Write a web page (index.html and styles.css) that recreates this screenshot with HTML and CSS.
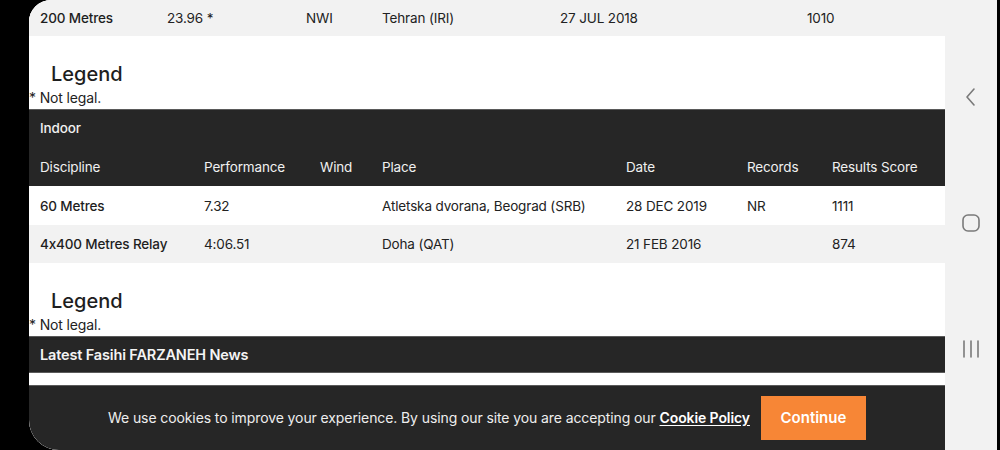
FILE: index.html
```html
<!DOCTYPE html>
<html lang="en">
<head>
<meta charset="utf-8">
<title>Fasihi FARZANEH</title>
<link rel="stylesheet" href="styles.css">
</head>
<body>
<div class="screen">
  <main class="page">
    <div class="row row-out alt">
      <span class="disc">200 Metres</span>
      <span>23.96 *</span>
      <span>NWI</span>
      <span>Tehran (IRI)</span>
      <span>27 JUL 2018</span>
      <span>1010</span>
    </div>

    <section class="legend">
      <h3 class="legend-title">Legend</h3>
      <p class="legend-note">* Not legal.</p>
    </section>

    <div class="dark-head">
      <div class="caption">Indoor</div>
      <div class="row row-in head">
        <span>Discipline</span>
        <span>Performance</span>
        <span>Wind</span>
        <span>Place</span>
        <span>Date</span>
        <span>Records</span>
        <span>Results Score</span>
      </div>
    </div>
    <div class="row row-in first">
      <span class="disc">60 Metres</span>
      <span>7.32</span>
      <span></span>
      <span>Atletska dvorana, Beograd (SRB)</span>
      <span>28 DEC 2019</span>
      <span>NR</span>
      <span>1111</span>
    </div>
    <div class="row row-in alt">
      <span class="disc">4x400 Metres Relay</span>
      <span>4:06.51</span>
      <span></span>
      <span>Doha (QAT)</span>
      <span>21 FEB 2016</span>
      <span></span>
      <span>874</span>
    </div>

    <section class="legend">
      <h3 class="legend-title">Legend</h3>
      <p class="legend-note">* Not legal.</p>
    </section>

    <div class="news-bar">Latest Fasihi FARZANEH News</div>

    <div class="cookie">
      <p class="cookie-text">We use cookies to improve your experience. By using our site you are accepting our <a class="cookie-link" href="#">Cookie Policy</a></p>
      <button class="cookie-btn">Continue</button>
    </div>
  </main>

  <nav class="navbar">
    <svg class="nav-icon" width="14" height="20" viewBox="0 0 14 20"><path d="M10 2 L3 10 L10 18" fill="none" stroke="#7a7a7a" stroke-width="1.6" stroke-linecap="round" stroke-linejoin="round"/></svg>
    <svg class="nav-icon" width="20" height="20" viewBox="0 0 20 20"><rect x="2" y="2" width="16" height="16" rx="5" fill="none" stroke="#7a7a7a" stroke-width="1.6"/></svg>
    <svg class="nav-icon" width="18" height="20" viewBox="0 0 18 20"><path d="M2 2 V18 M9 2 V18 M16 2 V18" fill="none" stroke="#7a7a7a" stroke-width="1.6" stroke-linecap="round"/></svg>
  </nav>
</div>
</body>
</html>
```

FILE: styles.css
```css
* { box-sizing: border-box; }

html, body {
  margin: 0;
  padding: 0;
  background: #000;
}

body {
  font-family: Inter, "Noto Sans", "Liberation Sans", sans-serif;
  font-feature-settings: "calt" 0;
  color: #222;
  font-size: 13.5px;
  letter-spacing: -0.15px;
}

.screen {
  margin-left: 29px;
  width: 968px;
  height: 450px;
  display: flex;
  background: #f2f2f2;
  border-radius: 22px 0 0 30px;
  overflow: hidden;
}

.page {
  position: relative;
  width: 916px;
  height: 450px;
  background: #fff;
  overflow: hidden;
}

.row {
  display: grid;
  align-items: center;
  padding-left: 11px;
  height: 38px;
  white-space: nowrap;
}

.row.alt { background: #f2f2f2; }

.row-out {
  grid-template-columns: 127px 139px 76px 178px 247px auto;
  height: 36px;
}

.row-in {
  grid-template-columns: 164px 116px 62px 244px 121px 85px auto;
}

.row-in.first { height: 39px; }

.disc { font-weight: 500; color: #1e1e1e; }

.legend {
  height: 73px;
  padding-top: 26px;
}

.legend-title {
  margin: 0 0 0 22px;
  font-size: 20px;
  font-weight: 500;
  line-height: 24px;
  letter-spacing: 0;
  color: #1e1e1e;
}

.legend-note {
  margin: 0;
  line-height: 23px;
  font-size: 14px;
  color: #222;
}

.dark-head {
  background: #262626;
  border-top: 1px solid #5a5a5a;
  color: #f0f0f0;
}

.caption {
  height: 37px;
  line-height: 37px;
  padding-left: 11px;
  font-weight: 500;
}

.row.head { height: 39px; }

.news-bar {
  height: 37px;
  line-height: 35px;
  padding-left: 11px;
  background: #262626;
  border-top: 1px solid #5a5a5a;
  border-bottom: 1px solid #5a5a5a;
  color: #f4f4f4;
  font-size: 14.5px;
  font-weight: 600;
}

.cookie {
  position: absolute;
  left: 0;
  right: 0;
  bottom: 0;
  height: 65px;
  background: #262626;
  border-top: 1px solid #5a5a5a;
  display: flex;
  align-items: center;
  justify-content: center;
  gap: 11px;
  padding-bottom: 1px;
}

.cookie-text {
  margin: 0;
  color: #eeeeee;
  font-size: 14px;
  letter-spacing: -0.1px;
  white-space: nowrap;
}

.cookie-link {
  color: #fff;
  font-weight: 600;
  text-decoration: underline;
  text-underline-offset: 2px;
}

.cookie-btn {
  width: 105px;
  height: 44px;
  border: 0;
  background: #f78636;
  color: #fff;
  font-family: inherit;
  font-size: 15px;
  font-weight: 600;
  letter-spacing: 0;
  cursor: pointer;
}

.navbar {
  width: 52px;
  height: 450px;
  background: #f2f2f2;
  display: flex;
  flex-direction: column;
  align-items: center;
  padding-top: 87px;
  gap: 106px;
}

.nav-icon { display: block; }
```
